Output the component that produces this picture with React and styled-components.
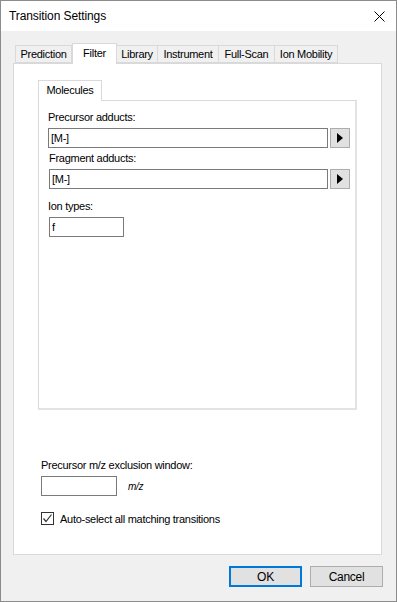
import React from 'react';
import styled, { createGlobalStyle } from 'styled-components';

const Global = createGlobalStyle`
  html, body {
    margin: 0;
    padding: 0;
    background: #ffffff;
  }
  * {
    box-sizing: border-box;
  }
`;

const Window = styled.div`
  width: 397px;
  height: 602px;
  border: 1px solid #8c8c8c;
  display: flex;
  flex-direction: column;
  font-family: "Liberation Sans", Arial, sans-serif;
  font-size: 11px;
  letter-spacing: -0.28px;
  color: #000;
`;

const TitleBar = styled.div`
  height: 30px;
  background: #fff;
  display: flex;
  align-items: center;
  justify-content: space-between;
  padding: 0 11px 0 8px;
  font-size: 12px;
  letter-spacing: -0.1px;
`;

const Body = styled.div`
  flex: 1;
  background: #f0f0f0;
  display: flex;
  flex-direction: column;
  padding: 12px 14px 14px 12px;
`;

const TabStrip = styled.div`
  display: flex;
  align-items: flex-end;
  height: 20px;
  padding-left: 2px;
  position: relative;
  z-index: 1;
`;

const Tab = styled.div`
  width: ${p => p.$w}px;
  height: ${p => (p.$active ? 21 : 18)}px;
  margin-bottom: ${p => (p.$active ? -1 : 0)}px;
  border: 1px solid #d9d9d9;
  border-bottom: ${p => (p.$active ? 'none' : '1px solid #d9d9d9')};
  border-left: ${p => (p.$first || p.$active ? '1px solid #d9d9d9' : 'none')};
  background: ${p => (p.$active ? '#fff' : '#f0f0f0')};
  display: flex;
  justify-content: center;
  align-items: ${p => (p.$active ? 'flex-start' : 'center')};
  padding-top: ${p => (p.$active ? 3 : 0)}px;
  white-space: nowrap;
`;

const Panel = styled.div`
  flex: 1;
  background: #fff;
  border: 1px solid #d9d9d9;
  display: flex;
  flex-direction: column;
  padding: 16px 24px 0 24px;
`;

const InnerStrip = styled.div`
  display: flex;
  height: 20px;
  position: relative;
  z-index: 1;
`;

const InnerTab = styled.div`
  width: 64px;
  height: 21px;
  border: 1px solid #d9d9d9;
  border-bottom: none;
  background: #fff;
  display: flex;
  justify-content: center;
  padding-top: 3px;
`;

const InnerPanel = styled.div`
  width: 319px;
  height: 310px;
  border: 1px solid #d9d9d9;
  border-right: 2px solid #e3e3e3;
  border-bottom: 2px solid #e3e3e3;
  padding: 9px 0 0 9px;
  display: flex;
  flex-direction: column;
`;

const Label = styled.div`
  height: 15px;
  line-height: 15px;
  margin-left: ${p => p.$indent || 0}px;
`;

const FieldRow = styled.div`
  display: flex;
  gap: 2px;
  margin: 3px 0 ${p => p.$after || 0}px ${p => p.$indent || 0}px;
  align-items: center;
`;

const TextBox = styled.div`
  width: ${p => p.$w}px;
  height: 20px;
  border: 1px solid #7a7a7a;
  background: #fff;
  padding-left: 2px;
  line-height: 18px;
`;

const ArrowButton = styled.div`
  width: 20px;
  height: 20px;
  background: #e1e1e1;
  border: 1px solid #adadad;
  display: flex;
  align-items: center;
  justify-content: center;
`;

const Unit = styled.span`
  font-style: italic;
  font-size: 10px;
  margin-left: 9px;
`;

const Bottom = styled.div`
  display: flex;
  flex-direction: column;
  margin-top: 48px;
  margin-left: 3px;
`;

const CheckRow = styled.div`
  display: flex;
  align-items: center;
  gap: 6px;
  margin-top: 16px;
`;

const Check = styled.div`
  width: 13px;
  height: 13px;
  border: 1px solid #333;
  background: #fff;
  display: flex;
  align-items: center;
  justify-content: center;
`;

const ButtonRow = styled.div`
  display: flex;
  justify-content: flex-end;
  gap: 8px;
  margin-top: 11px;
  margin-right: -1px;
`;

const DialogButton = styled.div`
  width: 73px;
  height: 21px;
  background: #e1e1e1;
  border: ${p => (p.$default ? '2px solid #0078d7' : '1px solid #adadad')};
  display: flex;
  align-items: center;
  justify-content: center;
  font-size: 12px;
`;

const Arrow = () => (
  <svg width="6" height="10" viewBox="0 0 6 10">
    <path d="M0 0 L6 5 L0 10 Z" fill="#000" />
  </svg>
);

const tabs = [
  { name: 'Prediction', w: 57 },
  { name: 'Filter', w: 45, active: true },
  { name: 'Library', w: 41 },
  { name: 'Instrument', w: 61 },
  { name: 'Full-Scan', w: 56 },
  { name: 'Ion Mobility', w: 63 },
];

export default function App() {
  return (
    <>
      <Global />
      <Window>
        <TitleBar>
          <span>Transition Settings</span>
          <svg width="11" height="11" viewBox="0 0 11 11">
            <path d="M0.5 0.5 L10.5 10.5 M10.5 0.5 L0.5 10.5" stroke="#000" strokeWidth="1" />
          </svg>
        </TitleBar>
        <Body>
          <TabStrip>
            {tabs.map((t, i) => (
              <Tab key={t.name} $w={t.w} $active={t.active} $first={i === 0}>
                {t.name}
              </Tab>
            ))}
          </TabStrip>
          <Panel>
            <InnerStrip>
              <InnerTab>Molecules</InnerTab>
            </InnerStrip>
            <InnerPanel>
              <Label>Precursor adducts:</Label>
              <FieldRow $after={3}>
                <TextBox $w={280}>[M-]</TextBox>
                <ArrowButton><Arrow /></ArrowButton>
              </FieldRow>
              <Label $indent={1}>Fragment adducts:</Label>
              <FieldRow $indent={1} $after={10}>
                <TextBox $w={279}>[M-]</TextBox>
                <ArrowButton><Arrow /></ArrowButton>
              </FieldRow>
              <Label>Ion types:</Label>
              <FieldRow $indent={1}>
                <TextBox $w={75}>f</TextBox>
              </FieldRow>
            </InnerPanel>
            <Bottom>
              <Label>Precursor m/z exclusion window:</Label>
              <FieldRow>
                <TextBox $w={76} />
                <Unit>m/z</Unit>
              </FieldRow>
              <CheckRow>
                <Check>
                  <svg width="11" height="11" viewBox="0 0 11 11">
                    <path d="M1.5 5.5 L4 8.5 L9.5 1.5" stroke="#333" strokeWidth="1.2" fill="none" />
                  </svg>
                </Check>
                <span>Auto-select all matching transitions</span>
              </CheckRow>
            </Bottom>
          </Panel>
          <ButtonRow>
            <DialogButton $default>OK</DialogButton>
            <DialogButton>Cancel</DialogButton>
          </ButtonRow>
        </Body>
      </Window>
    </>
  );
}
